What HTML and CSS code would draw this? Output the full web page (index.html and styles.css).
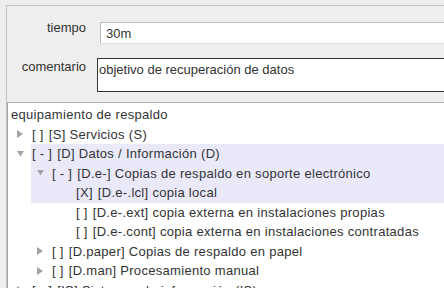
FILE: index.html
```html
<!DOCTYPE html>
<html lang="es">

<head>
  <meta charset="utf-8" />
  <title>Equipamiento de respaldo</title>
  <link rel="stylesheet" href="styles.css">
</head>

<body>
  <div class="panel">
    <!-- Form fields -->
    <div class="form">
      <div class="form-row">
        <label class="form-label label-top">tiempo</label>
        <div class="field">30m</div>
      </div>
      <div class="form-row">
        <label class="form-label">comentario</label>
        <div class="textarea">objetivo de recuperación de datos</div>
      </div>
    </div>

    <!-- Tree -->
    <div class="tree">
      <div class="row root">equipamiento de respaldo</div>
      <div class="row lvl1"><span class="arrow"><svg width="10" height="10" viewBox="0 0 10 10"><polygon points="1,1 7,5 1,9" /></svg></span><span class="check">[ ]</span><span class="text">[S] Servicios (S)</span></div>
      <div class="row lvl1 hl"><span class="arrow"><svg width="10" height="10" viewBox="0 0 10 10"><polygon points="1,2 8,2 4.5,7.5" /></svg></span><span class="check">[ - ]</span><span class="text">[D] Datos / Información (D)</span></div>
      <div class="row lvl2 hl"><span class="arrow"><svg width="10" height="10" viewBox="0 0 10 10"><polygon points="1,2 8,2 4.5,7.5" /></svg></span><span class="check">[ - ]</span><span class="text">[D.e-] Copias de respaldo en soporte electrónico</span></div>
      <div class="row lvl3 hl"><span class="check">[X]</span><span class="text">[D.e-.lcl] copia local</span></div>
      <div class="row lvl3"><span class="check">[ ]</span><span class="text">[D.e-.ext] copia externa en instalaciones propias</span></div>
      <div class="row lvl3"><span class="check">[ ]</span><span class="text">[D.e-.cont] copia externa en instalaciones contratadas</span></div>
      <div class="row lvl2"><span class="arrow"><svg width="10" height="10" viewBox="0 0 10 10"><polygon points="1,1 7,5 1,9" /></svg></span><span class="check">[ ]</span><span class="text">[D.paper] Copias de respaldo en papel</span></div>
      <div class="row lvl2"><span class="arrow"><svg width="10" height="10" viewBox="0 0 10 10"><polygon points="1,1 7,5 1,9" /></svg></span><span class="check">[ ]</span><span class="text">[D.man] Procesamiento manual</span></div>
      <div class="row lvl1"><span class="arrow"><svg width="10" height="10" viewBox="0 0 10 10"><polygon points="1,1 7,5 1,9" /></svg></span><span class="check">[ - ]</span><span class="text">[IS] Sistemas de información (IS)</span></div>
    </div>
  </div>
</body>

</html>
```

FILE: styles.css
```css
/* Reset */
* {
  margin: 0;
  padding: 0;
  box-sizing: border-box;
}

html,
body {
  height: 100%;
  overflow: hidden;
}

body {
  font-family: 'Liberation Sans', Arial, sans-serif;
  font-size: 13px;
  color: #333333;
  background-color: #eeeeee;
}

/* Outer panel */
.panel {
  margin: 5px 0 0 6px;
  border-top: 1px solid #c2c2c2;
  border-left: 1px solid #c2c2c2;
  height: 100%;
}

/* Form */
.form {
  height: 96px;
  padding-top: 16px;
}

.form-row {
  display: flex;
  align-items: flex-start;
  margin-bottom: 14px;
}

.form-label {
  width: 79px;
  text-align: right;
  line-height: 15px;
  padding-top: 1px;
}

.label-top {
  padding-top: 0;
  margin-top: -2px;
}

.field {
  margin-left: 14px;
  flex: 1;
  height: 22px;
  background-color: white;
  border: 1px solid #bdbdbd;
  border-bottom-color: #e0e0e0;
  border-right: none;
  padding: 3px 0 0 5px;
  line-height: 15px;
}

.textarea {
  margin-left: 11px;
  flex: 1;
  height: 34px;
  background-color: white;
  border: 1px solid #333333;
  border-right: none;
  padding: 3px 0 0 1px;
  line-height: 15px;
}

/* Tree */
.tree {
  background-color: white;
  border-top: 1px solid #b5b5b5;
  border-left: 1px solid #a8a8a8;
  height: 100%;
  padding-top: 2px;
  letter-spacing: 0.3px;
}

.row {
  display: flex;
  align-items: center;
  height: 19.5px;
  white-space: nowrap;
}

.root {
  padding-left: 3px;
}

.lvl1 {
  padding-left: 8px;
}

.lvl2 {
  padding-left: 28px;
}

.lvl3 {
  padding-left: 68px;
}

.hl {
  background: linear-gradient(to right, transparent 23px, #e9e9fa 23px);
}

.arrow {
  width: 16px;
  display: flex;
  align-items: center;
}

.arrow svg {
  fill: #a3a3a3;
}

.check {
  margin-right: 5px;
}
```
